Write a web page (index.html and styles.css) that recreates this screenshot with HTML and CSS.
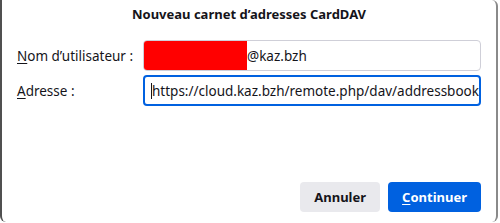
FILE: index.html
```html
<!DOCTYPE html>
<html lang="fr">
<head>
    <meta charset="UTF-8">
    <title>Nouveau carnet d’adresses CardDAV</title>
    <link rel="stylesheet" href="styles.css">
</head>
<body>
    <div class="dialog">
        <h1 class="dialog-title">Nouveau carnet d’adresses CardDAV</h1>

        <div class="form">
            <label class="form-label"><u>N</u>om d’utilisateur :</label>
            <div class="field">
                <span class="redacted"></span>
                <span class="field-text">@kaz.bzh</span>
            </div>

            <label class="form-label"><u>A</u>dresse :</label>
            <div class="field focused">
                <span class="caret"></span>
                <span class="field-text">https://cloud.kaz.bzh/remote.php/dav/addressbook</span>
            </div>
        </div>

        <div class="actions">
            <button class="btn">Annuler</button>
            <button class="btn primary"><u>C</u>ontinuer</button>
        </div>
    </div>
</body>
</html>
```

FILE: styles.css
```css
* {
    margin: 0;
    padding: 0;
    box-sizing: border-box;
}

body {
    background: #fff;
    font-family: 'Noto Sans', 'Open Sans', sans-serif;
    font-size: 13.5px;
    color: #15141a;
}

.dialog {
    display: flex;
    flex-direction: column;
    width: 498px;
    height: 222px;
    padding: 5px 15px 10px 15px;
    background: #fff;
    border-left: 2px solid #505050;
    border-right: 2px solid #8a8a8a;
    border-radius: 0 6px 6px 6px;
}

.dialog-title {
    font-size: 13px;
    font-weight: bold;
    line-height: 18px;
    text-align: center;
}

.form {
    display: grid;
    grid-template-columns: 126px 1fr;
    row-gap: 4px;
    margin-top: 17px;
    align-items: center;
}

.form-label {
    line-height: 18px;
}

.form-label u {
    text-underline-offset: 2px;
}

.field {
    display: flex;
    align-items: center;
    height: 31px;
    border: 1px solid #cfcfd8;
    border-radius: 4px;
    overflow: hidden;
    white-space: nowrap;
}

.field.focused {
    border: 2px solid #0061e0;
    padding-left: 6px;
}

.redacted {
    align-self: stretch;
    width: 103px;
    background: #ff0000;
    flex-shrink: 0;
}

.field-text {
    line-height: 18px;
}

.caret {
    width: 1px;
    height: 16px;
    background: #15141a;
    flex-shrink: 0;
}

.actions {
    display: flex;
    justify-content: flex-end;
    gap: 8px;
    margin-top: auto;
}

.btn {
    height: 30px;
    padding: 0 14px;
    border: none;
    border-radius: 4px;
    background: #e9e9ed;
    color: #15141a;
    font-family: inherit;
    font-size: 13px;
    font-weight: bold;
    cursor: pointer;
}

.btn.primary {
    background: #0061e0;
    color: #fff;
    min-width: 92px;
}

.btn u {
    text-underline-offset: 2px;
}
```
